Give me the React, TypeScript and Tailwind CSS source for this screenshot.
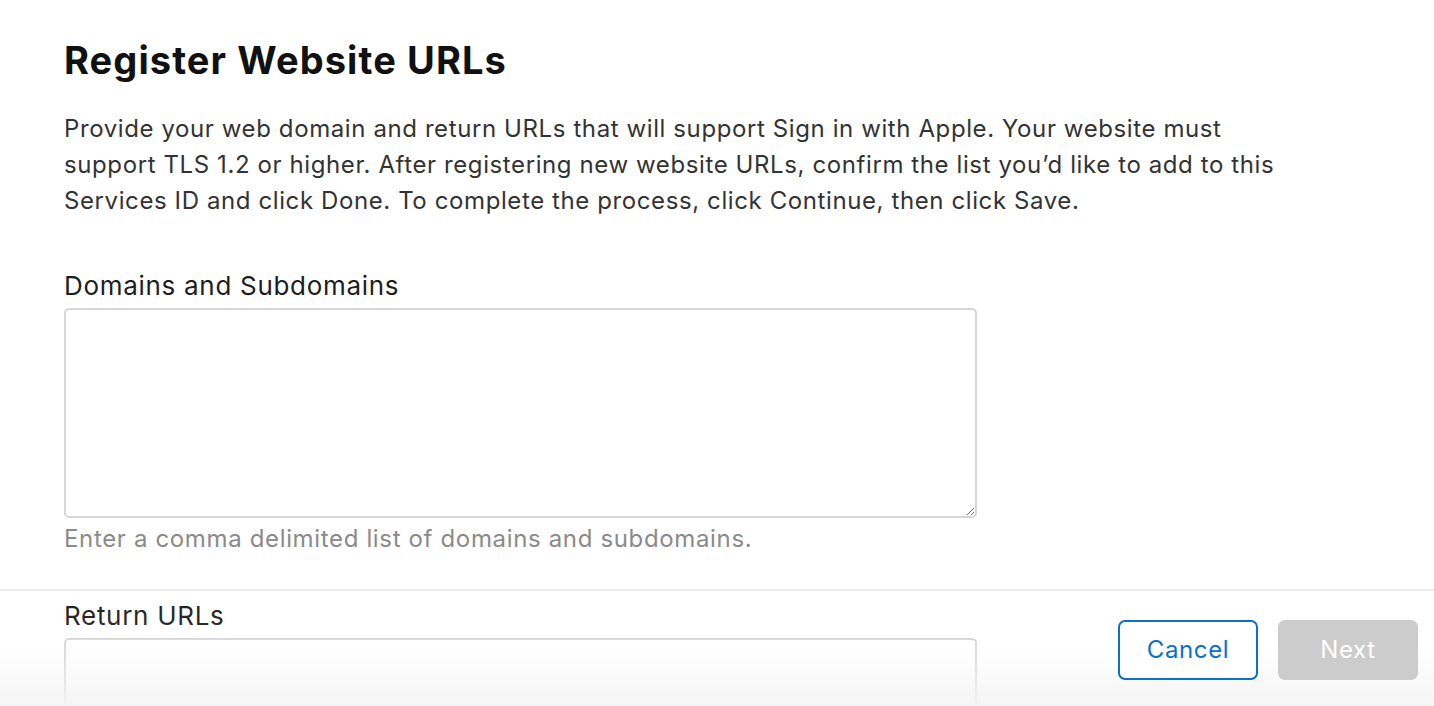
import React from "react";

const font = { fontFamily: "Inter, 'Noto Sans', sans-serif" };

function Field({ label, hint }: { label: string; hint?: string }) {
  return (
    <div className="flex flex-col">
      <label className="text-[26px] leading-[30px] tracking-[0.7px] text-[#1d1d1f]">{label}</label>
      <textarea className="mt-[7px] h-[210px] w-[913px] rounded-[5px] border-2 border-[#d6d6d6] bg-white outline-none" />
      {hint && (
        <p className="mt-[6px] text-[24px] leading-[30px] tracking-[0.65px] text-[#8a8a8a]">{hint}</p>
      )}
    </div>
  );
}

export default function App() {
  return (
    <div className="relative h-[706px] w-full overflow-hidden bg-white" style={font}>
      <div className="px-16 pt-[38px]">
        <h1 className="text-[38px] font-bold leading-[44px] tracking-[1.1px] text-[#111]">
          Register Website URLs
        </h1>
        <p className="mt-[29px] max-w-[1232px] text-[24px] leading-[36px] tracking-[0.6px] text-[#333]">
          Provide your web domain and return URLs that will support Sign in with Apple. Your website must
          support TLS 1.2 or higher. After registering new website URLs, confirm the list you’d like to add
          to this Services ID and click Done. To complete the process, click Continue, then click Save.
        </p>

        <div className="mt-[52px]">
          <Field label="Domains and Subdomains" hint="Enter a comma delimited list of domains and subdomains." />
        </div>
        <div className="mt-[47px]">
          <Field label="Return URLs" />
        </div>
      </div>

      {/* Footer bar */}
      <div className="absolute inset-x-0 bottom-0 flex h-[117px] items-center justify-end gap-[20px] border-t-2 border-[#ececec] bg-gradient-to-b from-white/0 via-white/10 to-[#f4f4f4]/90 pr-4 pt-[2px]">
        <button className="h-[60px] w-[140px] rounded-[7px] border-2 border-[#0a70c9] bg-white text-[24px] tracking-[0.6px] text-[#0a70c9]">
          Cancel
        </button>
        <button className="h-[60px] w-[140px] rounded-[7px] bg-[#cccccc] text-[24px] tracking-[0.6px] text-white">
          Next
        </button>
      </div>
    </div>
  );
}
